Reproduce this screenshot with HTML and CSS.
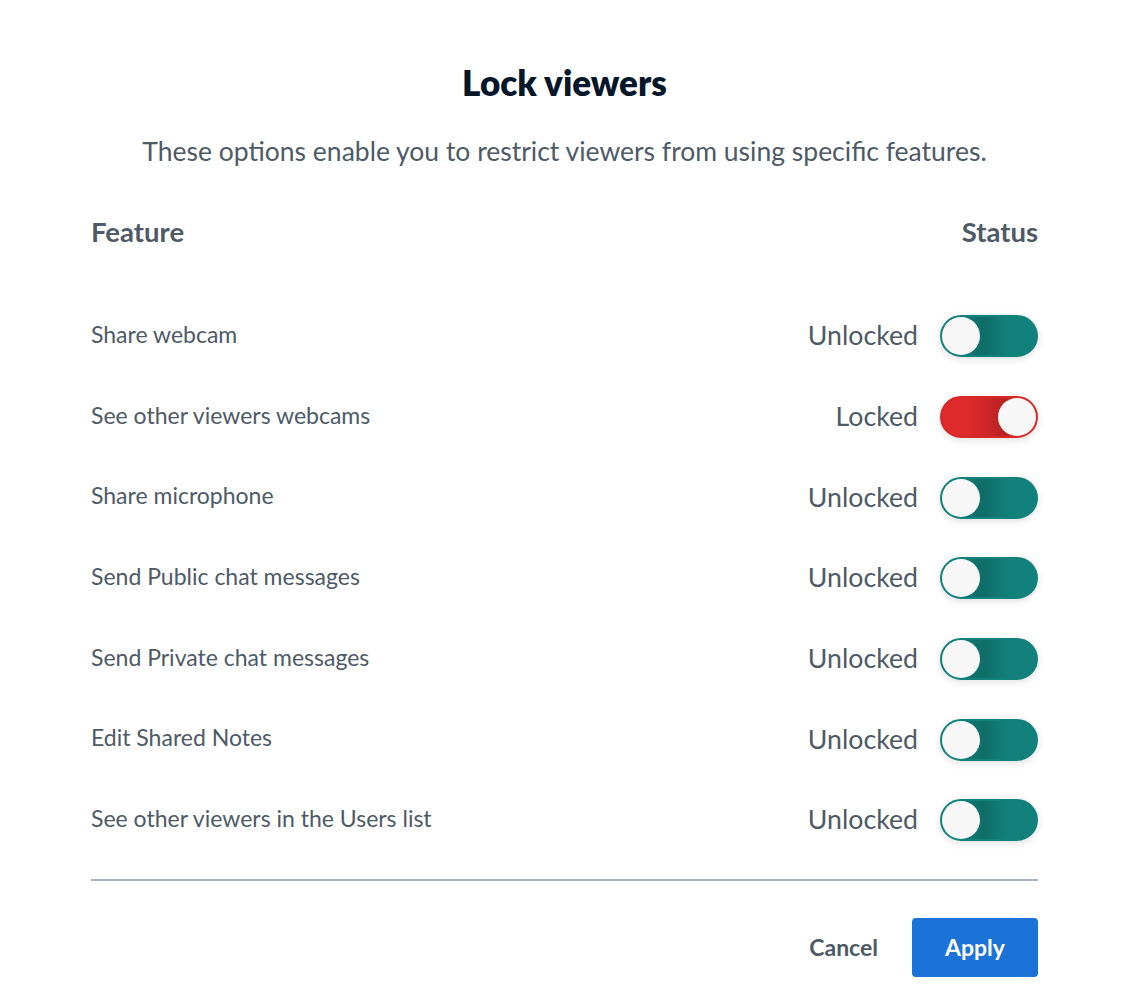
FILE: index.html
```html
<!DOCTYPE html>
<html>
<head>
<meta charset="utf-8">
<link rel="stylesheet" href="styles.css">
</head>
<body>
<div class="modal">
  <h1 class="title">Lock viewers</h1>
  <p class="subtitle">These options enable you to restrict viewers from using specific features.</p>
  <div class="head">
    <span>Feature</span>
    <span>Status</span>
  </div>
  <div class="rows">
    <div class="row"><span class="name">Share webcam</span><div class="status"><span class="label">Unlocked</span><span class="toggle off"><span class="knob"></span></span></div></div>
    <div class="row"><span class="name">See other viewers webcams</span><div class="status"><span class="label">Locked</span><span class="toggle on"><span class="knob"></span></span></div></div>
    <div class="row"><span class="name">Share microphone</span><div class="status"><span class="label">Unlocked</span><span class="toggle off"><span class="knob"></span></span></div></div>
    <div class="row"><span class="name">Send Public chat messages</span><div class="status"><span class="label">Unlocked</span><span class="toggle off"><span class="knob"></span></span></div></div>
    <div class="row"><span class="name">Send Private chat messages</span><div class="status"><span class="label">Unlocked</span><span class="toggle off"><span class="knob"></span></span></div></div>
    <div class="row"><span class="name">Edit Shared Notes</span><div class="status"><span class="label">Unlocked</span><span class="toggle off"><span class="knob"></span></span></div></div>
    <div class="row"><span class="name">See other viewers in the Users list</span><div class="status"><span class="label">Unlocked</span><span class="toggle off"><span class="knob"></span></span></div></div>
  </div>
  <div class="footer">
    <button class="btn cancel">Cancel</button>
    <button class="btn apply">Apply</button>
  </div>
</div>
</body>
</html>
```

FILE: styles.css
```css
html, body {
  margin: 0;
  padding: 0;
  background: #ffffff;
}
body {
  font-family: "Lato", "Noto Sans", sans-serif;
  color: #4e5a66;
}
.modal {
  width: 947px;
  margin-left: 91px;
  display: flex;
  flex-direction: column;
}
.title {
  margin: 0;
  height: 135px;
  box-sizing: border-box;
  padding-top: 62px;
  font-size: 35px;
  font-weight: 800;
  color: #06172a;
  text-align: center;
  line-height: 40px;
}
.subtitle {
  margin: 0;
  height: 81px;
  font-size: 26.5px;
  line-height: 32px;
  text-align: center;
  color: #4e5a66;
}
.head {
  display: flex;
  justify-content: space-between;
  font-size: 27.5px;
  font-weight: 700;
  line-height: 32px;
  height: 79px;
}
.rows {
  display: flex;
  flex-direction: column;
}
.row {
  height: 80.7px;
  display: flex;
  align-items: center;
  justify-content: space-between;
  font-size: 23px;
}
.name {
  margin-top: -3px;
}
.status {
  display: flex;
  align-items: center;
  gap: 22px;
}
.label {
  font-size: 26.7px;
}
.toggle {
  position: relative;
  width: 98px;
  height: 42px;
  border-radius: 21px;
  box-sizing: border-box;
  margin-top: 2px;
  box-shadow: 0 2px 8px rgba(0,0,0,0.12);
}
.toggle.off {
  background: linear-gradient(90deg, #13817b 0%, #0f6d68 45%, #13817b 70%);
  border: 2px solid #13817b;
}
.toggle.on {
  background: linear-gradient(90deg, #de2a2a 30%, #b92222 65%, #de2a2a 100%);
  border: 2px solid #d72828;
}
.knob {
  position: absolute;
  top: 0;
  width: 38px;
  height: 38px;
  border-radius: 50%;
  background: #f7f7f7;
}
.toggle.off .knob { left: 0; }
.toggle.on .knob { right: 0; }
.footer {
  margin-top: 19px;
  border-top: 2px solid #a9b4be;
  display: flex;
  justify-content: flex-end;
  align-items: center;
  gap: 34px;
  padding-top: 37px;
}
.btn {
  font-family: inherit;
  font-size: 23px;
  font-weight: 700;
  border: none;
  cursor: pointer;
}
.cancel {
  background: transparent;
  color: #4e5a66;
  padding: 0;
}
.apply {
  background: #1b73d7;
  color: #ffffff;
  width: 126px;
  height: 59px;
  border-radius: 4px;
}
```
